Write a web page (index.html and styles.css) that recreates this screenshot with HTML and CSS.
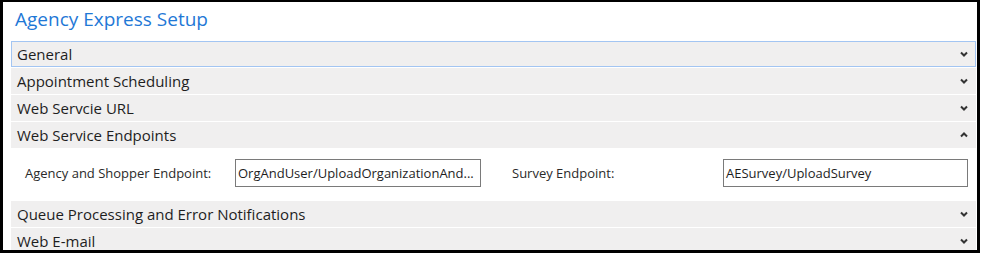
FILE: index.html
```html
<!DOCTYPE html>
<html lang="en">
<head>
    <meta charset="UTF-8">
    <title>Agency Express Setup</title>
    <link rel="stylesheet" href="styles.css">
</head>
<body>
    <div class="frame">
        <div class="title">Agency Express Setup</div>

        <div class="section focused">
            <span>General</span>
            <svg class="chev" viewBox="0 0 8 6"><path d="M1 1.5 L4 4.5 L7 1.5"/></svg>
        </div>
        <div class="section">
            <span>Appointment Scheduling</span>
            <svg class="chev" viewBox="0 0 8 6"><path d="M1 1.5 L4 4.5 L7 1.5"/></svg>
        </div>
        <div class="section">
            <span>Web Servcie URL</span>
            <svg class="chev" viewBox="0 0 8 6"><path d="M1 1.5 L4 4.5 L7 1.5"/></svg>
        </div>
        <div class="section">
            <span>Web Service Endpoints</span>
            <svg class="chev" viewBox="0 0 8 6"><path d="M1 4.5 L4 1.5 L7 4.5"/></svg>
        </div>
        <div class="section-body">
            <label class="field-label">Agency and Shopper Endpoint:</label>
            <div class="field">OrgAndUser/UploadOrganizationAnd...</div>
            <label class="field-label second">Survey Endpoint:</label>
            <div class="field">AESurvey/UploadSurvey</div>
        </div>
        <div class="section">
            <span>Queue Processing and Error Notifications</span>
            <svg class="chev" viewBox="0 0 8 6"><path d="M1 1.5 L4 4.5 L7 1.5"/></svg>
        </div>
        <div class="section last">
            <span>Web E-mail</span>
            <svg class="chev" viewBox="0 0 8 6"><path d="M1 1.5 L4 4.5 L7 1.5"/></svg>
        </div>
    </div>
</body>
</html>
```

FILE: styles.css
```css
* { box-sizing: border-box; margin: 0; padding: 0; }
body {
    font-family: 'Open Sans', 'Noto Sans', sans-serif;
    background-color: #FFFFFF;
    color: #222222;
}
.frame {
    width: 980px;
    height: 253px;
    border: 2px solid #000000;
    border-left-width: 3px;
    border-right-width: 3px;
    border-bottom-width: 3px;
    padding: 0 1px 0 8px;
    overflow: hidden;
}
.title {
    height: 39px;
    padding: 4px 0 0 4px;
    font-size: 19px;
    color: #1F78D6;
}
.section {
    display: flex;
    align-items: center;
    justify-content: space-between;
    height: 26px;
    margin-bottom: 1px;
    padding: 0 8px 0 6px;
    background-color: #F0EFEF;
    font-size: 15px;
    color: #1E1E1E;
}
.section.focused { box-shadow: inset 0 0 0 1px #A3C5F2; }
.section.last { height: 24px; margin-bottom: 0; padding-top: 1px; }
.chev {
    width: 8px;
    height: 6px;
    fill: none;
    stroke: #333333;
    stroke-width: 2;
}
.section-body {
    display: grid;
    grid-template-columns: 210px 246px 242px 245px;
    align-items: center;
    height: 51px;
    margin-bottom: 1px;
    padding: 0 0 3px 14px;
    background-color: #FFFFFF;
    font-size: 13px;
}
.field-label { color: #2A2A2A; }
.field-label.second { padding-left: 31px; }
.field {
    height: 28px;
    line-height: 26px;
    padding: 0 2px;
    border: 1px solid #7A7A7A;
    font-size: 13px;
    color: #1E1E1E;
    white-space: nowrap;
    overflow: hidden;
}
```
